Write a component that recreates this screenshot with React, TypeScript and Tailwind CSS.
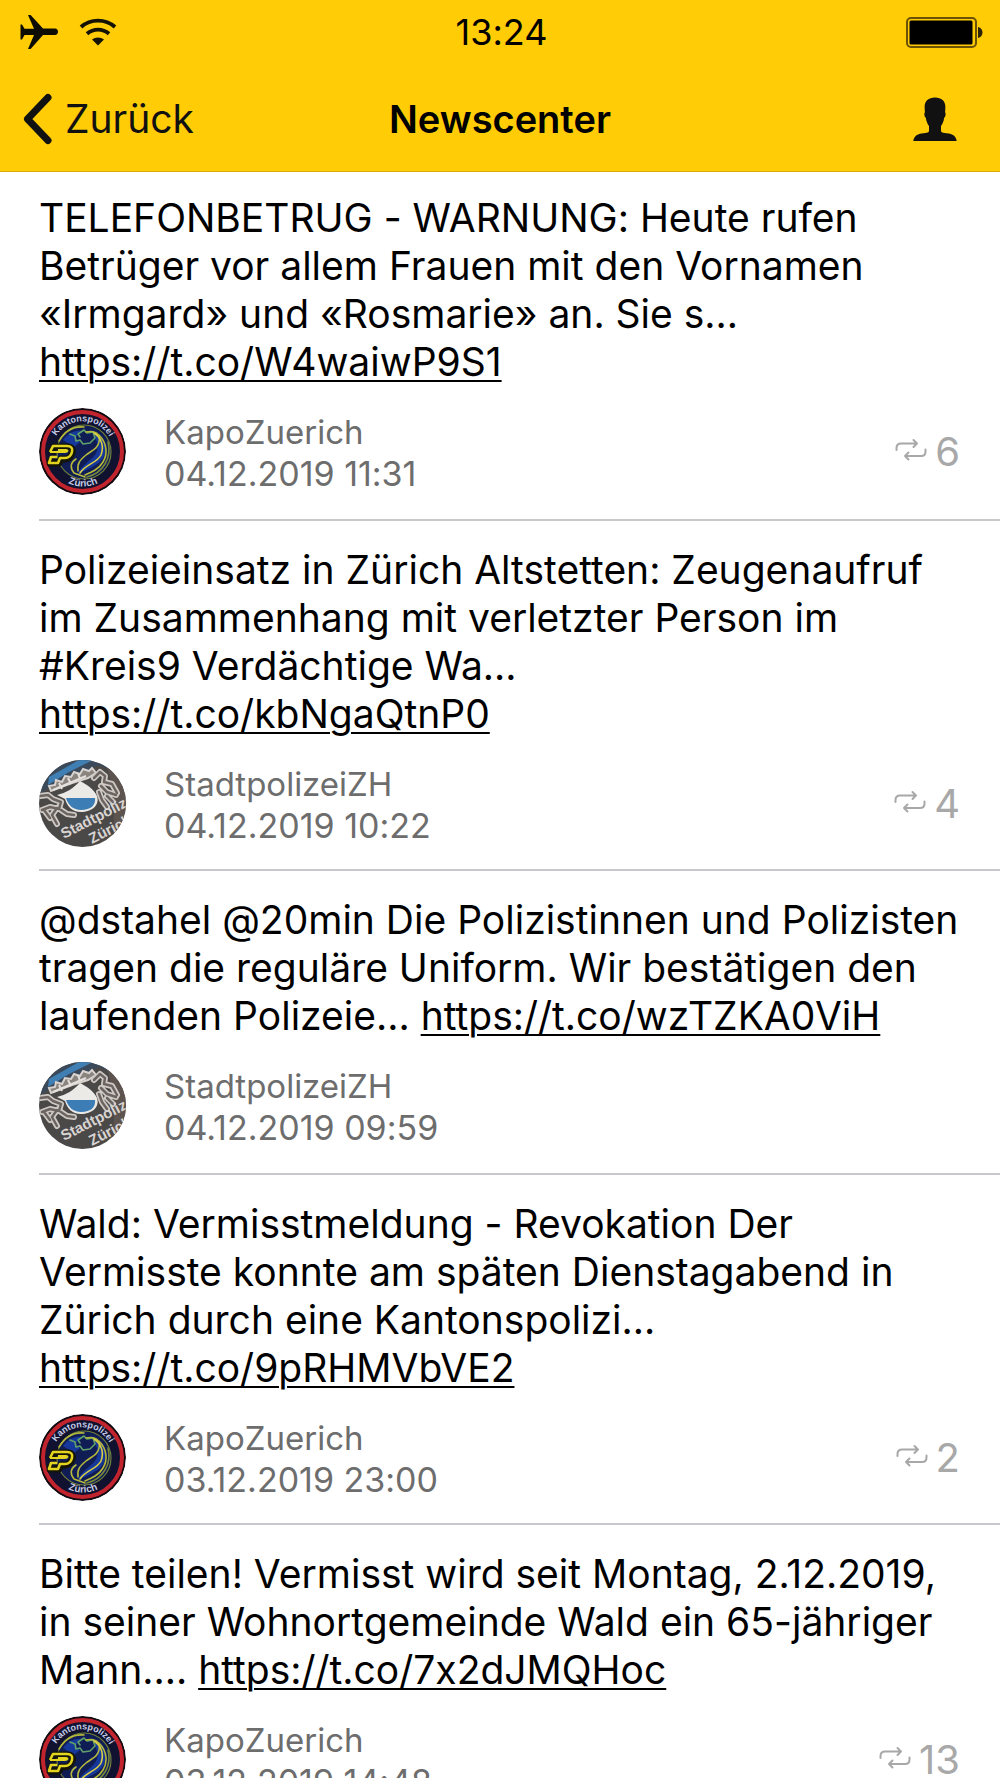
type Account = "KapoZuerich" | "StadtpolizeiZH";

interface Post {
    text: string;
    link: string;
    account: Account;
    date: string;
    retweets?: number;
}

const posts: Post[] = [
    {
        text: "TELEFONBETRUG - WARNUNG: Heute rufen Betrüger vor allem Frauen mit den Vornamen «Irmgard» und «Rosmarie» an. Sie s...",
        link: "https://t.co/W4waiwP9S1",
        account: "KapoZuerich",
        date: "04.12.2019 11:31",
        retweets: 6,
    },
    {
        text: "Polizeieinsatz in Zürich Altstetten: Zeugenaufruf im Zusammenhang mit verletzter Person im #Kreis9 Verdächtige Wa...",
        link: "https://t.co/kbNgaQtnP0",
        account: "StadtpolizeiZH",
        date: "04.12.2019 10:22",
        retweets: 4,
    },
    {
        text: "@dstahel @20min Die Polizistinnen und Polizisten tragen die reguläre Uniform. Wir bestätigen den laufenden Polizeie...",
        link: "https://t.co/wzTZKA0ViH",
        account: "StadtpolizeiZH",
        date: "04.12.2019 09:59",
    },
    {
        text: "Wald: Vermisstmeldung - Revokation Der Vermisste konnte am späten Dienstagabend in Zürich durch eine Kantonspolizi...",
        link: "https://t.co/9pRHMVbVE2",
        account: "KapoZuerich",
        date: "03.12.2019 23:00",
        retweets: 2,
    },
    {
        text: "Bitte teilen! Vermisst wird seit Montag, 2.12.2019, in seiner Wohnortgemeinde Wald ein 65-jähriger Mann....",
        link: "https://t.co/7x2dJMQHoc",
        account: "KapoZuerich",
        date: "03.12.2019 14:48",
        retweets: 13,
    },
];

function PlaneIcon() {
    return (
        <svg className="w-[38px] h-[36px]" viewBox="0 0 38 36" fill="#0d0c02">
            <path d="M8 1h2.600L23 14.500H35c1.900 0 3 1.500 3 3.300s-1.100 3.200-3 3.200H23L10.600 35H8l6-14H4.500L2 25.500H.5V10.500H2L4.500 14.800H14z" />
        </svg>
    );
}

function WifiIcon() {
    return (
        <svg className="w-[38px] h-[28px]" viewBox="0 0 38 28" fill="none" stroke="#141203">
            <path d="M2 9C11.500.4 26.500.4 36 9" strokeWidth="3.800" />
            <path d="M8 15.800c6.500-5.600 15.500-5.600 22 0" strokeWidth="3.800" />
            <path d="M13 21.500c3.500-2.800 8.500-2.800 12 0L19 27.500z" fill="#141203" stroke="none" />
        </svg>
    );
}

function BatteryIcon() {
    return (
        <svg className="w-[77px] h-[31px]" viewBox="0 0 77 31">
            <rect x="1" y="1" width="69" height="29" rx="4" fill="none" stroke="#6b5206" strokeWidth="2" />
            <rect x="3.500" y="3.500" width="63" height="24" rx="1.500" fill="#000" />
            <path d="M72 10c6 1 6 10 0 11z" fill="#2b2303" />
        </svg>
    );
}

function PersonIcon() {
    return (
        <svg className="w-[44px] h-[44px]" viewBox="0 0 44 44" fill="#111">
            <path d="M22 .5c6.500 0 10.400 3.500 10.400 9.500l-.3 5.500c1 .6.500 4.500-.9 5.300-.6 4-1.700 6.200-3.200 8.200v5.200c.8 1.600 3 1.900 5.500 2 6.500.4 9.700 3.300 10.200 7.800H.3c.5-4.500 3.700-7.400 10.200-7.800 2.500-.1 4.700-.4 5.500-2V29c-1.500-2-2.600-4.200-3.200-8.200-1.400-.8-1.900-4.700-.9-5.300L11.600 10C11.600 4 15.500.5 22 .5z" />
        </svg>
    );
}

function RetweetIcon() {
    return (
        <svg className="mb-1 w-[32px] h-[24px]" viewBox="0 0 32 24" fill="none" stroke="#a8a8a8" strokeWidth="2" strokeLinecap="round" strokeLinejoin="round">
            <path d="M1.500 12V10C1.500 7 3 5.500 6 5.500H22M18.500 2l3.500 3.500L18.500 9" />
            <path d="M30.500 11.500v2c0 3-1.500 4.500-4.500 4.500H10M13.500 14.500L10 18l3.500 3.500" />
        </svg>
    );
}

function KapoAvatar() {
    return (
        <svg className="size-[87px] shrink-0 rounded-full" viewBox="0 0 87 87" role="img" aria-label="KapoZuerich">
            <circle cx="43.500" cy="43.500" r="43.500" fill="#130b12" />
            <circle cx="43.500" cy="43.500" r="39.500" fill="#10122f" stroke="#c2242e" strokeWidth="4" />
            <circle cx="45" cy="44" r="27" fill="#101d55" stroke="#6f7f3c" strokeWidth="1.200" />
            <path d="M52 22c11 4 17 13 14 24-3 10-15 14-27 20 2-9 16-14 19-23 2-7-1-12-6-21z" fill="#16389b" />
            <path d="M24 32c6-8 13-10 19-9l-7 7 5 4-6 5z" fill="#16389b" />
            <g fill="none" stroke="#b5b83a" strokeWidth="1.600" strokeLinecap="round" strokeLinejoin="round">
                <path d="M20 33c6-10 15-15 25-14" />
                <path d="M31 26l5 2 1 5 4-1 3 4 7-1 5-5-2-6-6 1-3-3-6 4 2 3" stroke="#5fa06a" />
                <path d="M47 24c9-2 15 2 13 10-1 7-8 9-13 13-6 5-9 8-8 16" />
                <path d="M60 27c8 8 9 19 4 27-4 7-11 10-18 13" />
                <path d="M55 25c8 5 10 14 7 22-4 8-15 9-21 18" stroke="#d8cf45" />
                <path d="M37 51c-6 4-6 9-2 14l11 4" />
                <path d="M69 34c4 16-5 31-21 35" stroke="#77883a" />
            </g>
            <path d="M12 45l3-6h14c4 0 5 3 4 6s-3 6-7 6h-4l-2 4H11l1-4" fill="none" stroke="#141407" strokeWidth="7" strokeLinejoin="round" />
            <g fill="none" stroke="#e3d51f" strokeWidth="2.600" strokeLinejoin="round">
                <path d="M11 44l3-6h14c4 0 6 2 5 6s-3 6-7 6h-5l-2 5H10l2-6h6" />
                <path d="M11 44h15c3 0 3-2 1-2h-8" strokeWidth="2" />
            </g>
            <path id="kapo-top" d="M15.500 31A31 31 0 0 1 72 32" fill="none" />
            <path id="kapo-bottom" d="M20 69A35 35 0 0 0 68 69" fill="none" />
            <g fill="#c5cbe6" fontFamily="Liberation Sans, sans-serif" fontWeight="700" textAnchor="middle">
                <text fontSize="9">
                    <textPath href="#kapo-top" startOffset="50%">Kantonspolizei</textPath>
                </text>
                <text fontSize="10">
                    <textPath href="#kapo-bottom" startOffset="50%">Zürich</textPath>
                </text>
            </g>
        </svg>
    );
}

function StadtAvatar() {
    return (
        <svg className="size-[87px] shrink-0 rounded-full" viewBox="0 0 87 87" role="img" aria-label="StadtpolizeiZH">
            <rect width="87" height="87" fill="#4b4848" />
            <path d="M0 0h87v16L60 5 9 28 0 34z" fill="#3b4a5b" />
            <path d="M10 17L40 0h14L30 12 9 25z" fill="#3f7fb4" />
            <path d="M66 0h21v87H72c5-25 4-58-6-87z" fill="#5d5450" />
            {/* wall crown above the shield */}
            <path d="M12 31l-2-5 6-1 1-5 6 2 3-6 6 1 3-5 6 2 3-5 6 2 3-3 4 5-8 5-16 5z" fill="#8b8580" stroke="#d8d3cf" strokeWidth="2" />
            <path d="M14 30l33-14M20 23l3 6M29 18l3 6M39 13l2 6" stroke="#e4e0db" strokeWidth="2" fill="none" />
            {/* lions on both sides */}
            <g fill="none" stroke="#cfc9c4" strokeWidth="6" strokeLinecap="round" strokeLinejoin="round">
                <path d="M1 36l8-1 5 4 8 3-2 7-9-2-8 3M18 48l-5 7 5 9M22 50l6 4 7 1M5 50l6 8" />
                <path d="M55 18l6-6 5 4-1 6 8 2 5 9M62 26l6 6 9 3M60 32l3 8 5 7M68 36l6 6" />
            </g>
            <g fill="none" stroke="#6b6461" strokeWidth="2.500" strokeLinecap="round" strokeLinejoin="round">
                <path d="M1 36l8-1 5 4 8 3-2 7-9-2-8 3M18 48l-5 7 5 9M22 50l6 4 7 1M5 50l6 8" />
                <path d="M55 18l6-6 5 4-1 6 8 2 5 9M62 26l6 6 9 3M60 32l3 8 5 7M68 36l6 6" />
            </g>
            <path d="M18 35c9-2 17-7 23-14 6 3 14 8 17 15 3 9-5 16-16 16-9 0-14-6-16-13z" fill="#eceae7" />
            <path d="M27 38h29c1 7-4 12-14 12-8 0-13-5-15-12z" fill="#3c7db5" />
            <g fill="#d8d4d1" fontFamily="Liberation Sans, sans-serif" fontWeight="700">
                <text x="25" y="79" fontSize="15" transform="rotate(-27 25 79)">Stadtpolizei</text>
                <text x="53" y="84" fontSize="15" transform="rotate(-27 53 84)">Zürich</text>
            </g>
        </svg>
    );
}

function PostItem({ post }: { post: Post }) {
    return (
        <li className="flex min-h-[304px] flex-col gap-[22px] border-b-2 border-[#c8c7cc] pt-[25px] pb-[22px] first:pt-[22px] first:pb-6 last:border-b-0">
            <p className="pr-8 text-[39px] leading-[48px]">
                {post.text}{" "}
                <a href={post.link} className="underline decoration-2 underline-offset-4">
                    {post.link}
                </a>
            </p>
            <div className="flex items-center pr-10">
                {post.account === "KapoZuerich" ? <KapoAvatar /> : <StadtAvatar />}
                <div className="ml-[38px] flex-1 pt-0.5 text-[33px] leading-[41px] text-[#6d6d6d]">
                    <div>{post.account}</div>
                    <time className="block text-[34px]">{post.date}</time>
                </div>
                {post.retweets !== undefined && (
                    <div className="flex items-center gap-2 text-[40px] leading-[48px] text-[#a8a8a8]">
                        <RetweetIcon />
                        <span>{post.retweets}</span>
                    </div>
                )}
            </div>
        </li>
    );
}

export default function App() {
    return (
        <div className="min-h-screen bg-white font-['Inter',sans-serif] text-black [font-feature-settings:'calt'_0]">
            <header className="border-b border-[#d9ad05] bg-[#ffcc05]">
                <div className="grid h-16 grid-cols-3 items-center pr-[17px] pl-5">
                    <div className="flex items-center gap-[21px]">
                        <PlaneIcon />
                        <WifiIcon />
                    </div>
                    <div className="text-center text-[36px] leading-[42px]">13:24</div>
                    <div className="flex justify-end">
                        <BatteryIcon />
                    </div>
                </div>
                <nav className="grid h-[107px] grid-cols-3 items-center px-[23px] pt-0.5 text-[39px] leading-[48px]">
                    <button type="button" className="flex items-center gap-3 text-[#111]">
                        <svg className="w-[30px] h-[52px]" viewBox="0 0 30 52" fill="none" stroke="#111" strokeWidth="7" strokeLinecap="round" strokeLinejoin="round">
                            <path d="M25 4.500L4.500 26 25 47.500" />
                        </svg>
                        Zurück
                    </button>
                    <h1 className="text-center text-[38px] font-semibold">Newscenter</h1>
                    <button type="button" aria-label="Profil" className="justify-self-end pr-5">
                        <PersonIcon />
                    </button>
                </nav>
            </header>
            <ul className="pl-[39px]">
                {posts.map((post) => (
                    <PostItem key={post.link} post={post} />
                ))}
            </ul>
        </div>
    );
}
